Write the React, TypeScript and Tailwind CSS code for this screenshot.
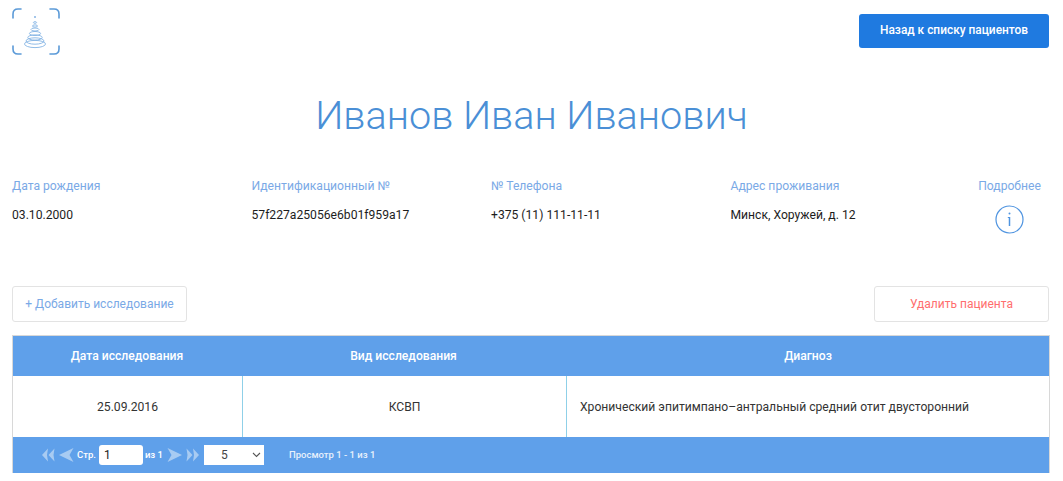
import React from "react";

const Logo = () => (
  <svg width="48" height="48" viewBox="0 0 48 48" fill="none">
    <g stroke="#5b9ad8" strokeWidth="1.6" strokeLinecap="round">
      <path d="M1 10 V6 Q1 1 6 1 H9" />
      <path d="M38 1 H42 Q47 1 47 6 V10" />
      <path d="M1 38 V41 Q1 46 6 46 H9" />
      <path d="M38 46 H42 Q47 46 47 41 V38" />
    </g>
    <g stroke="#85b4e4" strokeWidth="0.9" fill="none">
      <ellipse cx="23" cy="36" rx="10.5" ry="3.6" />
      <ellipse cx="23" cy="33" rx="9" ry="3.2" />
      <ellipse cx="23" cy="29.5" rx="7.2" ry="2.6" />
      <ellipse cx="23" cy="25.5" rx="5.6" ry="2" />
      <ellipse cx="23" cy="21.5" rx="4" ry="1.5" />
      <ellipse cx="23" cy="18" rx="2.6" ry="1.1" />
      <ellipse cx="23" cy="14.5" rx="1.6" ry="0.8" />
    </g>
    <rect x="22" y="8" width="2" height="2" fill="#a4c6ea" />
  </svg>
);

const Info = () => (
  <svg width="29" height="29" viewBox="0 0 29 29" fill="none" stroke="#4f94e0">
    <circle cx="14.5" cy="14.5" r="13.5" strokeWidth="1.2" />
    <path d="M14.5 12 V21" strokeWidth="1.5" />
    <path d="M12.8 12.5 H14.5" strokeWidth="1" />
    <circle cx="14.5" cy="8.5" r="1" fill="#4f94e0" stroke="none" />
  </svg>
);

const Arrow = ({ flip, double }: { flip?: boolean; double?: boolean }) => (
  <svg width={double ? 13 : 15} height="14" viewBox={double ? "0 0 13 14" : "0 0 15 14"} fill="#a8cbf2" className={flip ? "rotate-180" : ""}>
    {double ? (
      <>
        <path d="M6 0.5 L0 7 L6 13.5 L5 7 Z" />
        <path d="M12.5 0.5 L6.5 7 L12.5 13.5 L11.5 7 Z" />
      </>
    ) : (
      <path d="M14.5 0 L0 7 L14.5 14 L10.5 7 Z" />
    )}
  </svg>
);

const fields = [
  ["Дата рождения", "03.10.2000", "w-[239.5px]"],
  ["Идентификационный №", "57f227a25056e6b01f959a17", "w-[239.5px]"],
  ["№ Телефона", "+375 (11) 111-11-11", "w-[239.5px]"],
  ["Адрес проживания", "Минск, Хоружей, д. 12", "w-[247px]"],
];

export default function App() {
  return (
    <div className="w-[1063px] h-[481px] bg-white overflow-hidden px-3 font-['Roboto',sans-serif]">
      <div className="flex justify-between items-start h-[89px]">
        <div className="pt-2"><Logo /></div>
        <button className="mt-[14px] mr-[2px] w-[190px] h-[34px] rounded-[3px] bg-[#1f7ae0] text-white text-[11.9px] font-medium">
          Назад к списку пациентов
        </button>
      </div>
      <h1 className="h-[54px] text-center text-[39.6px] leading-[54px] text-[#4a8fd6] font-light">Иванов Иван Иванович</h1>
      <div className="flex mt-[32px] h-[113px] text-[12.15px] leading-[14px]">
        {fields.map(([label, value, w]) => (
          <div key={label} className={w}>
            <div className="h-[14px] mt-[4px] text-[#7aa9e6]">{label}</div>
            <div className="mt-[15px] text-[#1d1d1d]">{value}</div>
          </div>
        ))}
        <div className="flex flex-col items-center w-[64px]">
          <div className="h-[14px] mt-[4px] text-[#7aa9e6]">Подробнее</div>
          <div className="mt-[12px]"><Info /></div>
        </div>
      </div>
      <div className="flex justify-between items-start mr-[2px] -mt-[2px]">
        <button className="w-[175px] h-[36px] rounded-[3px] border border-[#e3e3e3] bg-white text-[#7aa9e6] text-[12px]">+ Добавить исследование</button>
        <button className="w-[175px] h-[36px] rounded-[3px] border border-[#e3e3e3] bg-white text-[#ff6e6e] text-[12px]">Удалить пациента</button>
      </div>
      <div className="mt-[13px] mr-[1px] border border-[#d8d8d8] border-b-0 text-[12.15px]">
        <div className="grid grid-cols-[228px_324px_1fr] h-[40px] bg-[#5fa0ea] text-white font-medium items-center text-center">
          <div>Дата исследования</div>
          <div className="ml-[1px]">Вид исследования</div>
          <div className="ml-[2px]">Диагноз</div>
        </div>
        <div className="grid grid-cols-[230px_324px_1fr] h-[61px] text-[#333] items-center text-center">
          <div className="h-full flex items-center justify-center border-r border-[#8fd0e8] pt-[1px]">25.09.2016</div>
          <div className="h-full flex items-center justify-center border-r border-[#8fd0e8] pt-[1px]">КСВП</div>
          <div className="text-left pl-[13px] pt-[1px]">Хронический эпитимпано–антральный средний отит двусторонний</div>
        </div>
        <div className="flex items-center h-[36px] bg-[#5fa0ea] text-white text-[9.5px] font-medium pl-[29px]">
          <Arrow double />
          <span className="ml-[4px]"><Arrow /></span>
          <span className="ml-[3px]">Стр.</span>
          <input readOnly value="1" className="ml-[3px] w-[44px] h-[20px] rounded-[3px] bg-white text-[#222] text-[12px] font-normal pl-[5px] outline-none" />
          <span className="ml-[2px]">из 1</span>
          <span className="ml-[4px]"><Arrow flip /></span>
          <span className="ml-[4px]"><Arrow flip double /></span>
          <div className="ml-[5px] w-[60px] h-[20px] bg-white text-[#444] text-[12px] font-normal flex items-center relative">
            <span className="ml-[17px]">5</span>
            <svg className="absolute right-[3px] top-[7px]" width="9" height="6" viewBox="0 0 9 6" fill="none" stroke="#555" strokeWidth="1.1"><path d="M1 1 L4.5 4.5 L8 1" /></svg>
          </div>
          <span className="ml-[25px] text-[#e8f1fc]">Просмотр 1 - 1 из 1</span>
        </div>
      </div>
    </div>
  );
}
